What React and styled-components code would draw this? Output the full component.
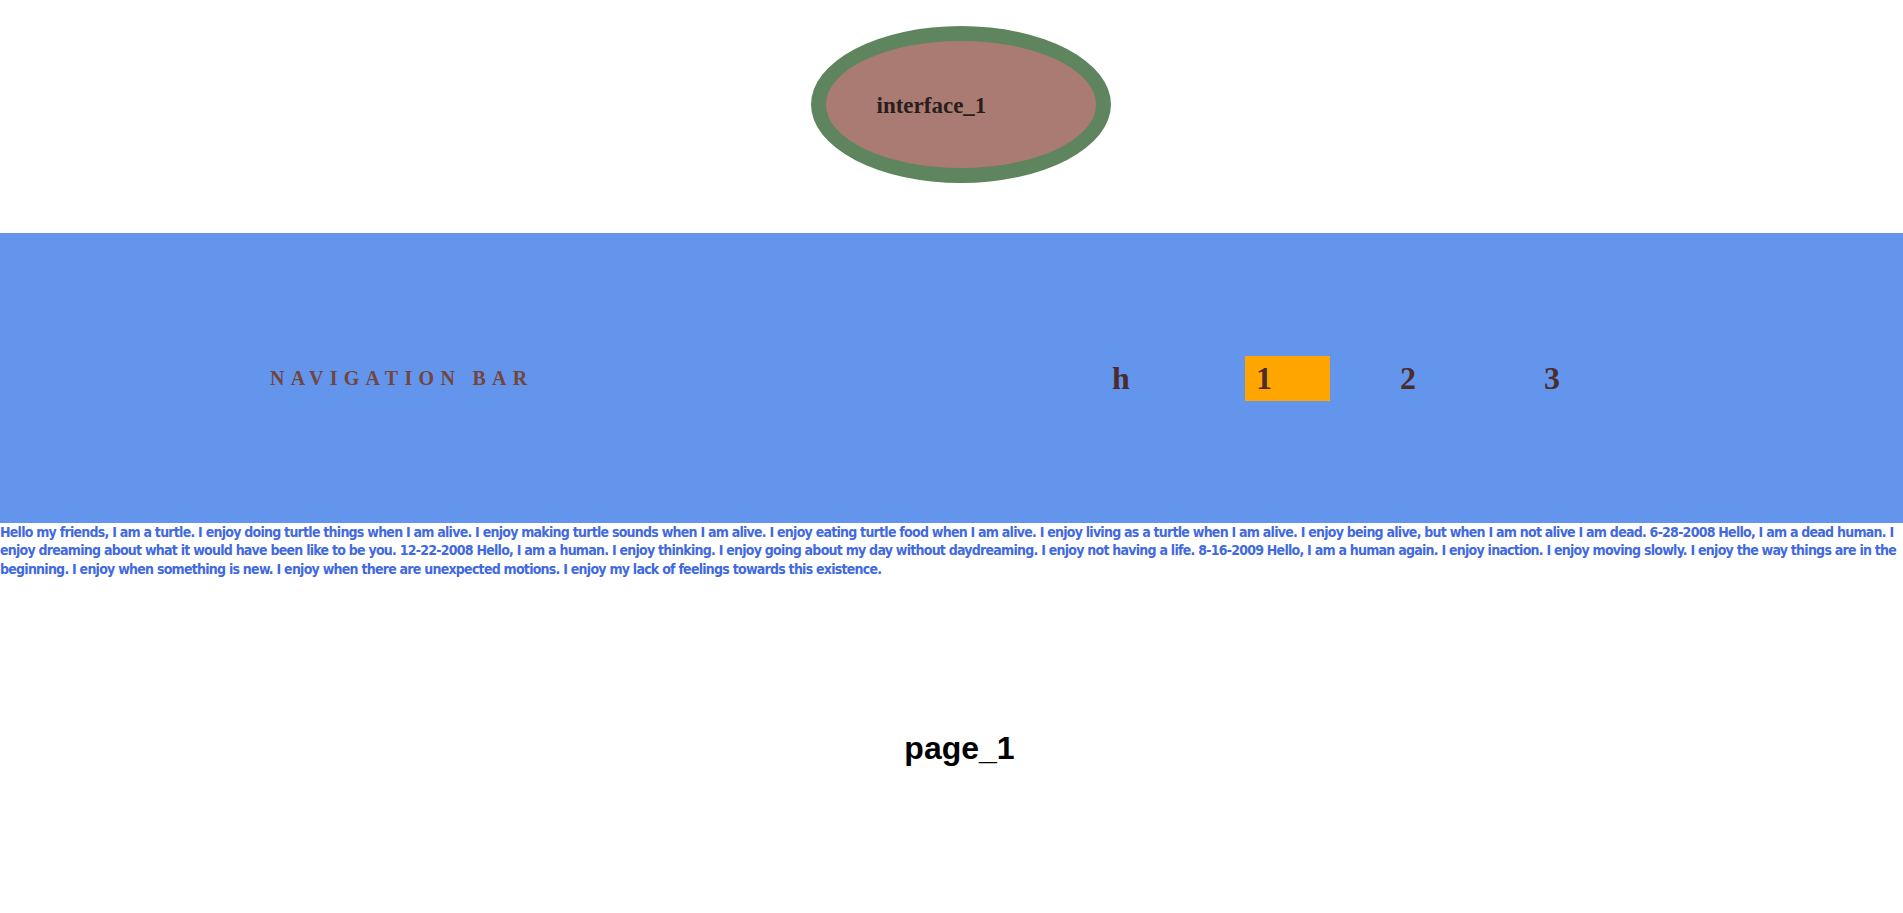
import React from "react";
import styled, { createGlobalStyle } from "styled-components";

const GlobalStyle = createGlobalStyle`
  html, body {
    margin: 0;
    padding: 0;
    background: #ffffff;
  }
`;

const navItems = ["h", "1", "2", "3"];

const storyText =
  "Hello my friends, I am a turtle. I enjoy doing turtle things when I am alive. I enjoy making turtle sounds when I am alive. I enjoy eating turtle food when I am alive. I enjoy living as a turtle when I am alive. I enjoy being alive, but when I am not alive I am dead. 6-28-2008 Hello, I am a dead human. I enjoy dreaming about what it would have been like to be you. 12-22-2008 Hello, I am a human. I enjoy thinking. I enjoy going about my day without daydreaming. I enjoy not having a life. 8-16-2009 Hello, I am a human again. I enjoy inaction. I enjoy moving slowly. I enjoy the way things are in the beginning. I enjoy when something is new. I enjoy when there are unexpected motions. I enjoy my lack of feelings towards this existence.";

export default function App() {
  // page "1" is the current one, so it gets the orange box
  const active = "1";

  return (
    <>
      <GlobalStyle />
      <Header>
        <Badge>
          <BadgeTitle>interface_1</BadgeTitle>
        </Badge>
      </Header>
      <NavBar>
        <Brand>Navigation Bar</Brand>
        <NavList>
          {navItems.map((item) => (
            <NavItem key={item} $active={item === active}>
              {item}
            </NavItem>
          ))}
        </NavList>
      </NavBar>
      <Story>{storyText}</Story>
      <PageSection>
        <PageTitle>page_1</PageTitle>
      </PageSection>
    </>
  );
}

const Header = styled.header`
  display: flex;
  justify-content: center;
  padding: 26px 0 50px 18px;
`;

// ellipse with thick green ring
const Badge = styled.div`
  width: 219px;
  height: 127px;
  padding-left: 51px;
  border: 15px solid #5e855e;
  border-radius: 50%;
  background: #a97b73;
  display: flex;
  align-items: center;
`;

const BadgeTitle = styled.span`
  font-family: "Liberation Serif", "Times New Roman", serif;
  font-weight: 700;
  font-size: 23px;
  color: #2a1d1b;
  margin-top: 2px;
`;

const NavBar = styled.nav`
  display: flex;
  align-items: center;
  height: 290px;
  background: #6495ed;
`;

const Brand = styled.div`
  margin-left: 270px;
  font-family: "Liberation Serif", "Times New Roman", serif;
  font-weight: 700;
  font-size: 20px;
  letter-spacing: 6.3px;
  text-transform: uppercase;
  color: #71463c;
`;

const NavList = styled.ul`
  display: flex;
  gap: 59px;
  list-style: none;
  margin: 0 285px 0 auto;
  padding: 0;
`;

const NavItem = styled.li`
  width: 85px;
  height: 45px;
  box-sizing: border-box;
  padding-left: 11px;
  display: flex;
  align-items: center;
  font-family: "Liberation Serif", "Times New Roman", serif;
  font-weight: 700;
  font-size: 32px;
  color: #4b2c2c;
  background: ${(p) => (p.$active ? "#ffa500" : "transparent")};
`;

const Story = styled.p`
  margin: 0;
  font-family: "DejaVu Sans Condensed", "Liberation Sans", sans-serif;
  font-weight: 700;
  font-size: 14px;
  letter-spacing: -0.75px;
  line-height: 18.3px;
  color: #4169e1;
`;

const PageSection = styled.section`
  padding: 152px 0 0 16px;
  text-align: center;
`;

const PageTitle = styled.h1`
  margin: 0;
  font-family: "Liberation Sans", Arial, sans-serif;
  font-weight: 700;
  font-size: 32px;
  color: #000000;
`;
